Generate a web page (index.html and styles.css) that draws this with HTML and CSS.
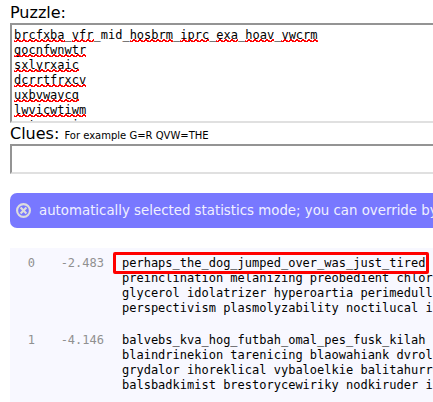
FILE: index.html
```html
<!DOCTYPE html>
<html lang="en">
<head>
<meta charset="utf-8">
<title>Cryptogram solver</title>
<link rel="stylesheet" href="styles.css">
</head>
<body>
<main class="page">
<div class="label puzzle-label">Puzzle:</div>
<div class="field puzzle"><span class="bad">brcfxba</span>_<span class="bad">vfr</span>_mid_<span class="bad">hosbrm</span>_<span class="bad">iprc</span>_<span class="bad">exa</span>_<span class="bad">hoav</span>_<span class="bad">vwcrm</span>
<span class="bad">gocnfwnwtr</span>
<span class="bad">sxlyrxaic</span>
<span class="bad">dcrrtfrxcv</span>
<span class="bad">uxbvwavcg</span>
<span class="bad">lwvicwtiwm</span>
<span class="bad">vrtmrxvvic</span></div>
<div class="label clues-label">Clues: <span class="hint">For example G=R QVW=THE</span></div>
<div class="field clues"></div>
<div class="notice">
<svg class="close" viewBox="0 0 14 14"><circle cx="7" cy="7" r="6"/><path d="M4.3 4.3l5.4 5.4M9.7 4.3l-5.4 5.4"/></svg>
<span>automatically selected statistics mode; you can override by</span>
</div>
<section class="results">
<div class="row">
<span class="num">0</span><span class="score">-2.483</span>
<div class="text"><span class="hit">perhaps_the_dog_jumped_over_was_just_tired</span>
preinclination melanizing preobedient chloral
glycerol idolatrizer hyperoartia perimedullary
perspectivism plasmolyzability noctilucal in</div>
</div>
<div class="row">
<span class="num">1</span><span class="score">-4.146</span>
<div class="text">balvebs_kva_hog_futbah_omal_pes_fusk_kilah
blaindrinekion tarenicing blaowahiank dvrole
grydalor ihoreklical vybaloelkie balitahurre
balsbadkimist brestorycewiriky nodkiruder in</div>
</div>
</section>
</main>
</body>
</html>
```

FILE: styles.css
```css
body {
  margin: 0;
  overflow: hidden;
  background: #fff;
  color: #000;
  font: 16px/19px "DejaVu Sans", sans-serif;
}
.page {
  height: 402px;
  padding-left: 10px;
  overflow: hidden;
  white-space: nowrap;
}
.label { height: 20px; }
.puzzle-label { padding-top: 3px; }
.clues-label { height: 20px; padding-top: 1px; }
.hint { font-size: 10px; }
.field {
  box-sizing: border-box;
  width: 460px;
  border: 2px solid;
  border-color: #949494 #e0e0e0 #e0e0e0 #949494;
  overflow: hidden;
}
.puzzle {
  height: 100px;
  padding: 3px 2px 0;
  font: 12px/15px "DejaVu Sans Mono", monospace;
  white-space: pre;
}
.bad { position: relative; }
/* Zigzag spelling mark, one gradient per pixel row */
.bad::after {
  content: "";
  position: absolute;
  left: 0;
  right: 0;
  bottom: 0;
  height: 3px;
  background-image:
    linear-gradient(90deg, transparent 3px, #f00 3px 5px, transparent 5px),
    linear-gradient(90deg, #ff4040 1px, transparent 1px 2px, #f00 2px),
    linear-gradient(90deg, #f00 3px, transparent 3px 5px, #f00 5px);
  background-size: 6px 1px;
  background-repeat: repeat-x;
  background-position: 0 0, 0 1px, 0 2px;
}
.clues { height: 30px; }
.notice {
  display: flex;
  align-items: center;
  gap: 8px;
  width: 500px;
  height: 35px;
  margin-top: 19px;
  padding-left: 6px;
  box-sizing: border-box;
  border-radius: 7px;
  background: #7878ff;
  color: #f0f0ff;
  font-size: 13.33px;
}
.close {
  width: 15px;
  height: 15px;
  fill: none;
  stroke: #ddd;
  stroke-width: 2;
}
.results {
  height: 154px;
  margin-top: 20px;
  padding-top: 8px;
  box-sizing: border-box;
  background: #f8f8ff;
  font: 12px/15px "DejaVu Sans Mono", monospace;
}
.row {
  display: grid;
  grid-template-columns: 26px 68px 1fr;
  margin-bottom: 17px;
}
.num, .score { color: #909090; text-align: right; }
.num { padding-right: 1px; }
.text { padding-left: 18px; white-space: pre; }
.hit { position: relative; }
.hit::after {
  content: "";
  position: absolute;
  left: -9px;
  top: -4px;
  width: 310px;
  height: 16px;
  border: 3px solid #f00;
  border-radius: 2px;
}
```
